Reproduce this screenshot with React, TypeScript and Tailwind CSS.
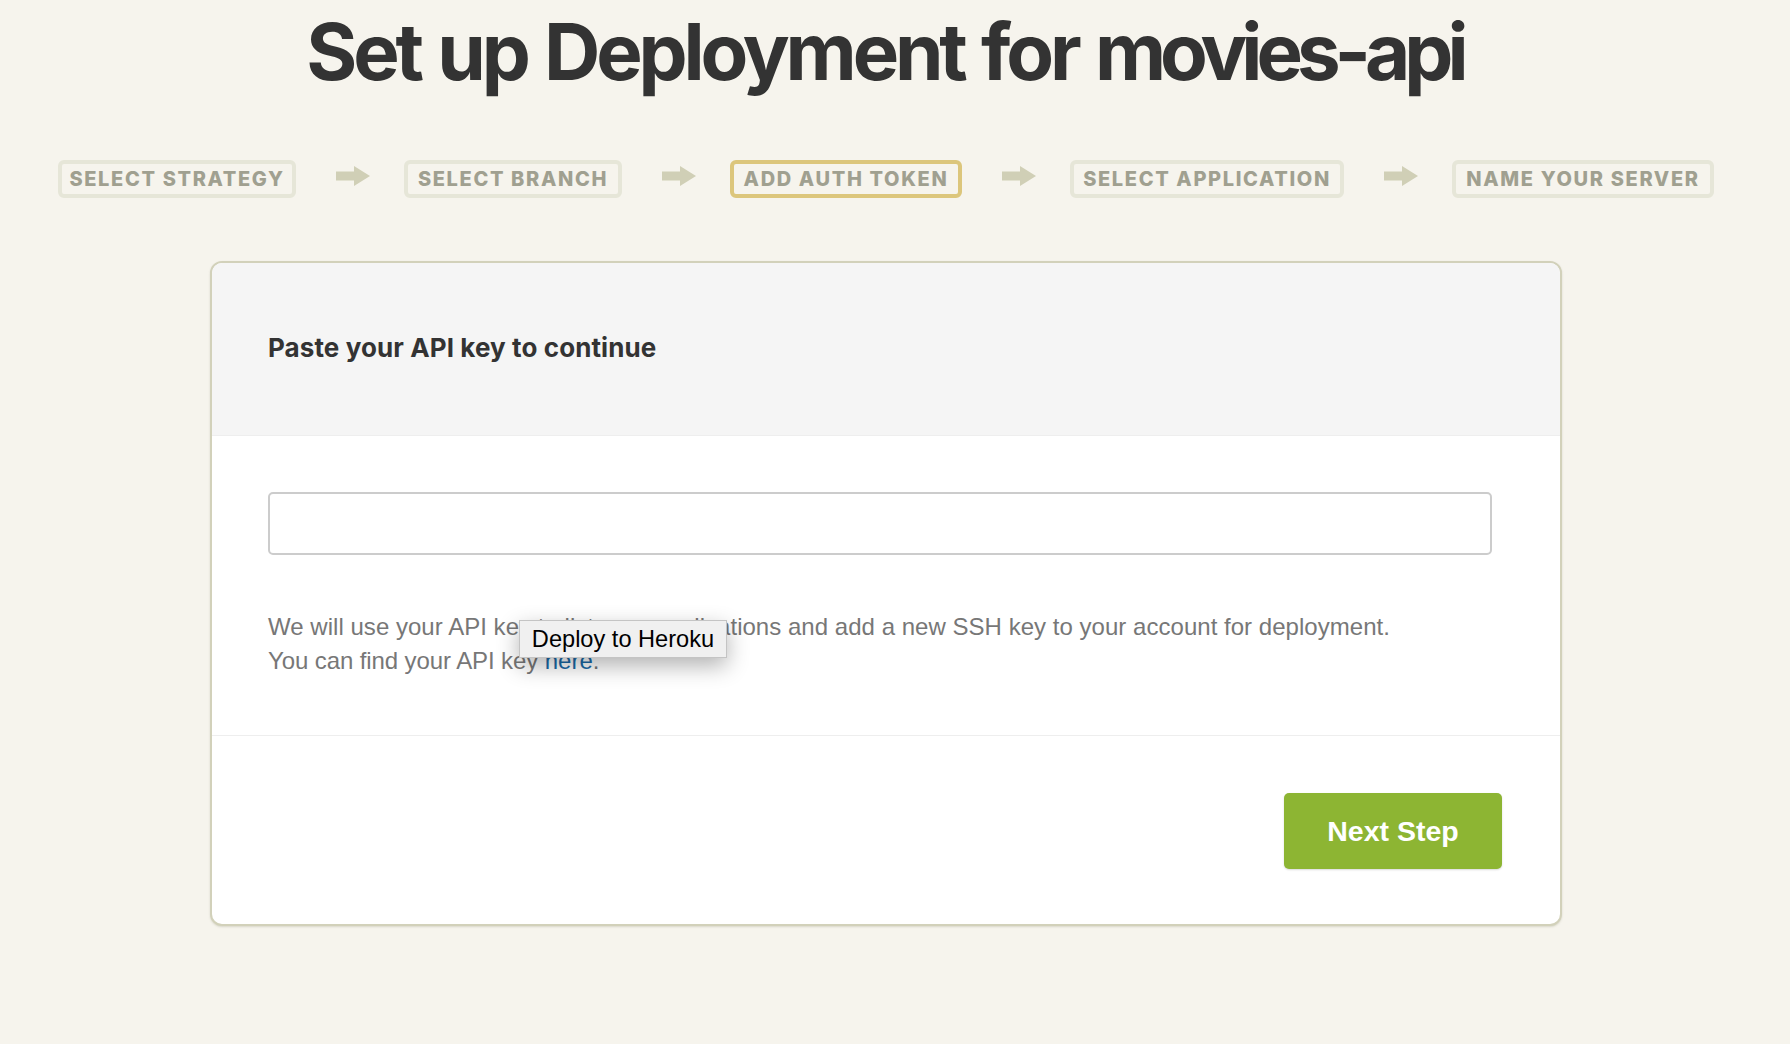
const steps = [
  { label: "SELECT STRATEGY", width: "w-[238px]", active: false },
  { label: "SELECT BRANCH", width: "w-[218px]", active: false },
  { label: "ADD AUTH TOKEN", width: "w-[232px]", active: true },
  { label: "SELECT APPLICATION", width: "w-[274px]", active: false },
  { label: "NAME YOUR SERVER", width: "w-[262px]", active: false },
];

function Arrow() {
  return (
    <svg width="34" height="20" viewBox="0 0 34 20" className="mt-[6px] ml-[40px] mr-[34px] shrink-0">
      <path d="M0 5.5h18V0l16 10-16 10v-5.5H0z" fill="#d0cfb6" />
    </svg>
  );
}

export default function App() {
  return (
    <div className="min-h-[1044px] bg-[#f6f4ed] font-['Liberation_Sans',sans-serif]">
      {/* header */}
      <h1 className="pt-[4px] h-[160px] text-center font-['Inter',sans-serif] text-[78px] leading-[95px] font-bold tracking-[-4.15px] [word-spacing:3px] text-[#333333] pr-[21px]">
        Set up Deployment for <span className="tracking-[-6px]">movies-api</span>
      </h1>

      {/* steps */}
      <div className="flex items-start pl-[58px]">
        {steps.map((s, i) => (
          <div key={s.label} className="flex items-start">
            <div
              className={`h-[38px] ${s.width} flex items-center justify-center rounded-[6px] border-[4px] font-['Inter',sans-serif] text-[20px] font-extrabold tracking-[1.65px] text-[#a0a090] ${
                s.active ? "border-[#dcc67c]" : "border-[#e6e6d8]"
              }`}
            >
              {s.label}
            </div>
            {i < steps.length - 1 && <Arrow />}
          </div>
        ))}
      </div>

      {/* card */}
      <div className="ml-[210px] mt-[63px] w-[1352px] rounded-[12px] border-2 border-[#d2d1ba] bg-white shadow-[0_1px_2px_rgba(150,150,120,0.3)] overflow-hidden">
        <div className="h-[173px] flex items-center bg-[#f5f5f5] border-b border-[#eeeeee] px-[56px] pb-[4px]">
          <h2 className="font-['Inter',sans-serif] text-[26px] font-bold tracking-[0.1px] text-[#333333]">
            Paste your API key to continue
          </h2>
        </div>

        <div className="relative h-[300px] border-b border-[#eeeeee] px-[56px] pt-[56px]">
          <input className="block w-[1224px] h-[63px] rounded-[5px] border-2 border-[#cccccc] bg-white" />
          <p className="mt-[55px] text-[24px] leading-[34px] tracking-[0.03px] text-[#777777]">
            We will use your API key to list your applications and add a new SSH key to your account for deployment.
            <br />
            <span className="tracking-[-0.1px]">You can find your API key </span>
            <a className="text-[#1a6aa8]">here</a>.
          </p>

          {/* native tooltip */}
          <div className="absolute left-[307px] top-[184px] h-[38px] w-[208px] flex items-center justify-center pt-[2px] bg-[#f0f0f0] border border-[#c4c4c4] text-[23.6px] text-black shadow-[0_8px_22px_rgba(0,0,0,0.3)]">
            Deploy to Heroku
          </div>
        </div>

        <div className="flex justify-end h-[188px] pt-[57px] pr-[58px]">
          <button className="h-[76px] w-[218px] rounded-[5px] bg-[#8db533] text-[28.5px] font-bold text-white shadow-[0_1px_2px_rgba(0,0,0,0.15)]">
            Next Step
          </button>
        </div>
      </div>
    </div>
  );
}
